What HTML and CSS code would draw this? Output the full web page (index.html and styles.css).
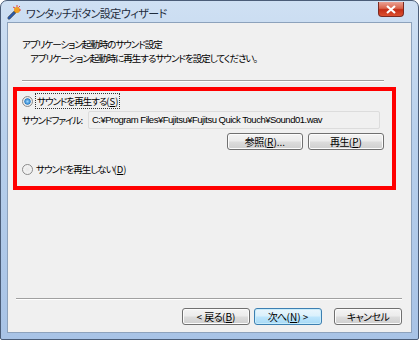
FILE: index.html
```html
<!DOCTYPE html>
<html>
<head>
    <title>ワンタッチボタン設定ウィザード</title>
    <meta charset="UTF-8">
    <link rel="stylesheet" href="styles.css">
</head>
<body>
    <div class="window">
        <div class="titlebar">
            <svg class="app-icon" width="16" height="16" viewBox="0 0 16 16">
                <path d="M3 13 L9 7" stroke="#333" stroke-width="3" stroke-linecap="round"/>
                <path d="M3 13 L8 8" stroke="#2a5db0" stroke-width="2" stroke-linecap="round"/>
                <circle cx="11" cy="5" r="3" fill="#f0a020"/>
                <path d="M11 0 L11 2 M15 5 L13 5 M14 1 L12.5 2.5 M7 2 L9 3" stroke="#e04040" stroke-width="1"/>
            </svg>
            <span class="title">ワンタッチボタン設定ウィザード</span>
            <div class="close-btn">
                <svg width="10" height="9" viewBox="0 0 10 9">
                    <path d="M1 1 L9 8 M9 1 L1 8" stroke="#fff" stroke-width="2.2"/>
                </svg>
            </div>
        </div>

        <div class="client">
            <div class="header">
                <div class="heading">アプリケーション起動時のサウンド設定</div>
                <div class="subheading">アプリケーション起動時に再生するサウンドを設定してください。</div>
            </div>
            <div class="separator top-sep"></div>

            <div class="highlight">
                <div class="option">
                    <span class="radio checked"></span>
                    <span class="focus-label">サウンドを再生する<span class="key">(<u>S</u>)</span></span>
                </div>
                <div class="file-row">
                    <label>サウンドファイル:</label>
                    <div class="path-field">C:¥Program Files¥Fujitsu¥Fujitsu Quick Touch¥Sound01.wav</div>
                </div>
                <div class="file-buttons">
                    <button class="btn">参照<span class="key">(<u>R</u>)...</span></button>
                    <button class="btn">再生<span class="key">(<u>P</u>)</span></button>
                </div>
                <div class="option off">
                    <span class="radio"></span>
                    <span>サウンドを再生しない<span class="key">(<u>D</u>)</span></span>
                </div>
            </div>

            <div class="separator bottom-sep"></div>
            <div class="nav-buttons">
                <button class="btn nav"><span class="key">&lt; </span>戻る<span class="key">(<u>B</u>)</span></button>
                <button class="btn nav default">次へ<span class="key">(<u>N</u>) &gt;</span></button>
                <button class="btn nav cancel">キャンセル</button>
            </div>
        </div>
    </div>
</body>
</html>
```

FILE: styles.css
```css
body {
    margin: 0;
    font-family: "Noto Sans CJK JP", "Noto Sans", sans-serif;
    font-size: 9.5px;
    letter-spacing: -1px;
    font-feature-settings: "palt";
    color: #000;
}
.key {
    letter-spacing: 0;
}
.window {
    width: 419px;
    height: 340px;
    box-sizing: border-box;
    border: 1px solid #4b5d78;
    border-radius: 7px 7px 2px 2px;
    background: linear-gradient(180deg, #cfe0f3 0%, #b8d0ec 40%, #a8c3e6 100%);
    display: flex;
    flex-direction: column;
    padding: 0 6px 6px 6px;
}
.titlebar {
    height: 21px;
    display: flex;
    align-items: center;
}
.app-icon {
    margin-left: -1px;
    margin-top: 2px;
}
.title {
    margin-left: 4px;
    margin-top: 2px;
    font-size: 11px;
    letter-spacing: -0.5px;
    color: #1e2c3c;
}
.close-btn {
    margin-left: auto;
    margin-right: 8px;
    margin-top: -4px;
    width: 26px;
    height: 15px;
    box-sizing: border-box;
    border: 1px solid #7b2a22;
    border-top: none;
    border-radius: 0 0 4px 4px;
    background: linear-gradient(180deg, #eaa193 0%, #d9634b 45%, #c42d16 55%, #dc5030 100%);
    display: flex;
    align-items: center;
    justify-content: center;
}
.client {
    flex: 1;
    background: #f0f0f0;
    border: 1px solid #8da2bc;
    display: flex;
    flex-direction: column;
}
.header {
    padding: 14px 0 0 14px;
    line-height: 14px;
}
.subheading {
    padding-left: 8px;
}
.separator {
    height: 1px;
    background: #a0a0a0;
    border-bottom: 1px solid #fff;
}
.top-sep {
    margin: 15px 27px 0 14px;
}
.highlight {
    margin: 5px 15px 0 5px;
    height: 93px;
    border: 4px solid #ff0000;
    padding: 2px 0 0 5px;
}
.option {
    display: flex;
    align-items: center;
    height: 16px;
}
.option.off {
    margin-top: 11px;
}
.radio {
    width: 11px;
    height: 11px;
    box-sizing: border-box;
    border-radius: 50%;
    border: 1px solid #8a8a8a;
    background: radial-gradient(circle, #e8e8e8 0%, #f8f8f8 100%);
    margin-right: 3px;
    display: inline-block;
}
.radio.checked {
    background: radial-gradient(circle, #9fd8ff 0%, #2a7fc8 45%, #e6e6e6 55%, #f4f4f4 100%);
}
.focus-label {
    outline: 1px dotted #333;
    outline-offset: 0;
    padding: 0 1px;
}
.file-row {
    display: flex;
    align-items: center;
    margin-top: 2px;
}
.file-row label {
    width: 66px;
    white-space: nowrap;
}
.path-field {
    width: 292px;
    height: 18px;
    box-sizing: border-box;
    border: 1px solid #dcdcdc;
    border-radius: 2px;
    padding: 0 3px;
    line-height: 16px;
    white-space: nowrap;
    overflow: hidden;
    font-family: "Liberation Sans", "Noto Sans CJK JP", sans-serif;
    font-size: 9.5px;
    letter-spacing: -0.5px;
}
.file-buttons {
    display: flex;
    justify-content: flex-end;
    gap: 5px;
    margin: 4px 8px 0 0;
}
.btn {
    font-family: inherit;
    font-size: 10px;
    letter-spacing: -0.6px;
    font-feature-settings: "palt";
    width: 76px;
    height: 17px;
    padding: 0;
    line-height: 14px;
    border: 1px solid #707070;
    border-radius: 3px;
    background: linear-gradient(180deg, #f4f4f4 0%, #ebebeb 49%, #dddddd 51%, #cfcfcf 100%);
    box-shadow: inset 0 0 0 1px #fcfcfc;
    color: #000;
}
.bottom-sep {
    margin: 108px 9px 0 8px;
}
.nav-buttons {
    display: flex;
    justify-content: flex-end;
    margin: 8px 9px 0 0;
}
.btn.nav {
    width: 68px;
    height: 17px;
    margin-left: 4px;
}
.btn.default {
    border-color: #3c7fb1;
    background: linear-gradient(180deg, #eaf6fd 0%, #d9f0fc 49%, #bee6fd 51%, #a7d9f5 100%);
    box-shadow: inset 0 0 0 1px #c8ecfb;
}
.btn.cancel {
    margin-left: 12px;
}
```
